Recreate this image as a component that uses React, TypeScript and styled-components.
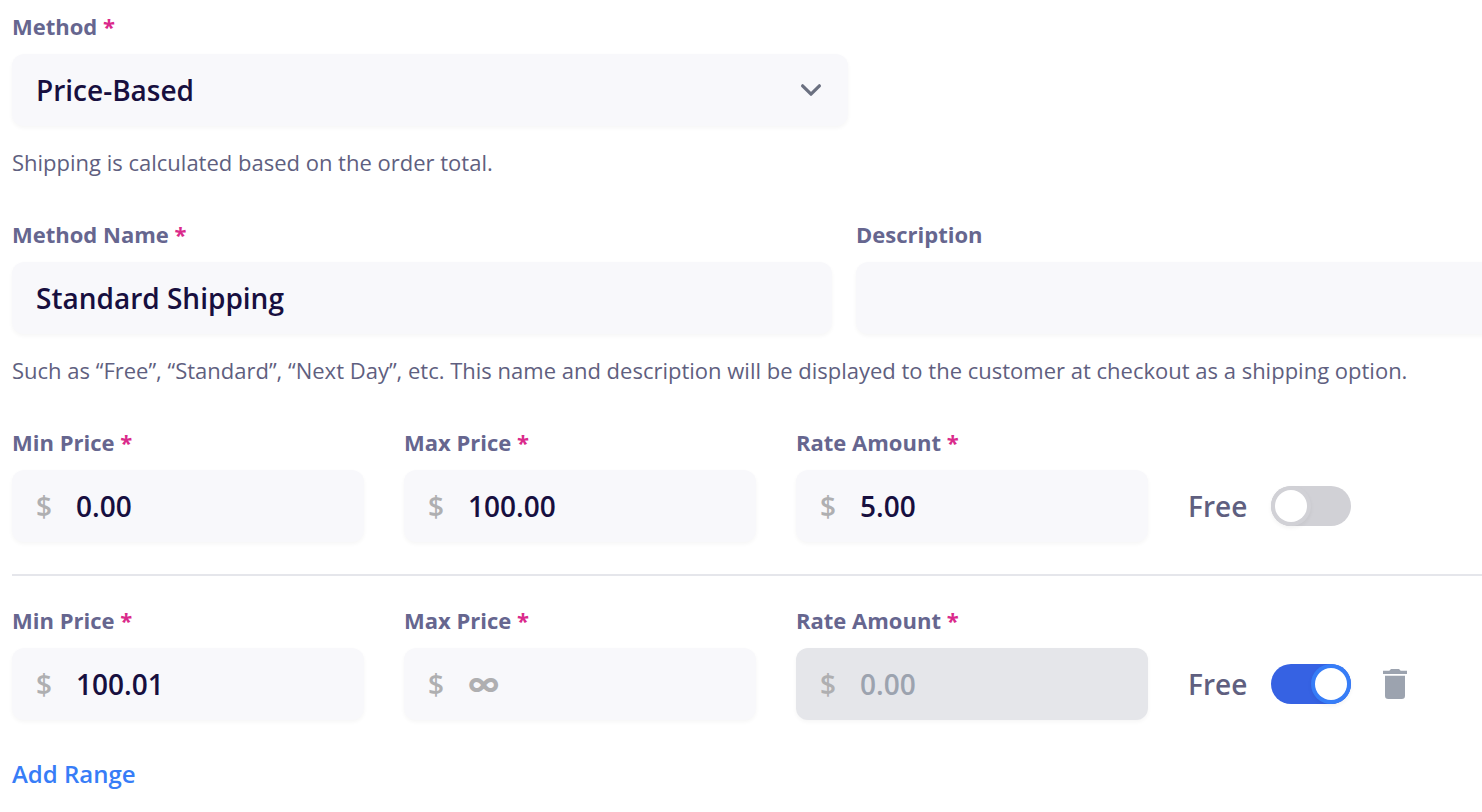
import React, { useState } from 'react';
import styled, { createGlobalStyle, css } from 'styled-components';

const GlobalStyle = createGlobalStyle`
  *, *::before, *::after { box-sizing: border-box; }
  body {
    margin: 0;
    background: #ffffff;
    color: #66668f;
    font-family: "Open Sans", "Noto Sans", sans-serif;
    overflow-x: hidden;
  }
`;

const Form = styled.form`
  padding: 12px 0 20px 12px;
`;

const Columns = styled.div`
  display: grid;
  grid-template-columns: 820px minmax(0, 1fr);
  column-gap: 24px;
  margin-right: -24px;
`;

const Field = styled.div<{ $width?: number }>`
  width: ${(p) => (p.$width ? `${p.$width}px` : 'auto')};
`;

const Label = styled.label`
  display: block;
  margin-bottom: 14px;
  font-size: 22px;
  font-weight: 700;
  line-height: 28px;
`;

const Star = styled.span`
  color: #da2a8b;
`;

const controlText = css`
  font-family: inherit;
  font-size: 28px;
  font-weight: 600;
  line-height: 40px;
  color: #170f3f;
`;

const surface = css`
  border: 0;
  border-radius: 12px;
  background: #f8f8fb;
  box-shadow: 0 2px 4px rgba(0, 0, 0, 0.04);
`;

const TextInput = styled.input`
  ${controlText}
  ${surface}
  display: block;
  width: 100%;
  height: 72px;
  padding: 0 24px;
  outline: none;
`;

const SelectBox = styled.div`
  ${surface}
  display: grid;
  align-items: center;
  height: 72px;
  > * { grid-area: 1 / 1; }
  > svg { justify-self: end; margin-right: 26px; pointer-events: none; }
`;

const Select = styled.select`
  ${controlText}
  appearance: none;
  width: 100%;
  height: 72px;
  padding: 0 64px 0 24px;
  border: 0;
  background: transparent;
  outline: none;
`;

const Hint = styled.p`
  margin: 20px 0 42px;
  font-size: 22px;
  line-height: 32px;
  color: #5f5f80;
`;

const RangeRow = styled.div`
  display: flex;
  align-items: flex-end;
  gap: 40px;
`;

const MoneyBox = styled.div<{ $disabled?: boolean }>`
  ${surface}
  display: flex;
  align-items: center;
  height: 72px;
  padding-left: 24px;
  ${(p) => p.$disabled && 'background: #e5e6ea;'}
`;

const Currency = styled.span`
  width: 40px;
  font-size: 28px;
  font-weight: 600;
  line-height: 40px;
  color: #afafb1;
`;

const MoneyInput = styled.input`
  ${controlText}
  flex: 1;
  min-width: 0;
  height: 72px;
  padding: 0;
  border: 0;
  background: transparent;
  outline: none;
  &::placeholder {
    font-family: Inter, sans-serif;
    font-size: 32px;
    font-weight: 700;
    color: #afafb1;
    opacity: 1;
  }
  &:disabled { color: #9ca3af; }
`;

const FreeToggle = styled.label`
  display: flex;
  align-items: center;
  gap: 24px;
  height: 72px;
  font-size: 28px;
  font-weight: 600;
  color: #5f5f80;
`;

const Switch = styled.input`
  appearance: none;
  display: flex;
  align-items: center;
  width: 80px;
  height: 40px;
  margin: 0;
  padding: 0 4px;
  border-radius: 20px;
  background: #d1d1d6;
  &::before {
    content: "";
    width: 32px;
    height: 32px;
    border-radius: 50%;
    background: #ffffff;
    box-shadow: 0 0 0 4px #d1d1d6, 0 2px 4px 4px rgba(0, 0, 0, 0.05);
  }
  &:checked {
    justify-content: flex-end;
    background: #3662e3;
  }
  &:checked::before { box-shadow: 0 0 0 4px #377df7, 0 2px 4px 4px rgba(0, 0, 0, 0.05); }
`;

const IconButton = styled.button`
  display: flex;
  align-items: center;
  height: 72px;
  margin-left: -8px;
  padding: 0;
  border: 0;
  background: transparent;
`;

const Divider = styled.hr`
  height: 2px;
  margin: 32px 0 30px;
  border: 0;
  background: #e5e6eb;
`;

const AddButton = styled.button`
  display: block;
  margin-top: 38px;
  padding: 0;
  border: 0;
  background: transparent;
  font-family: inherit;
  font-size: 24px;
  font-weight: 600;
  line-height: 32px;
  color: #377df7;
`;

const Chevron = () => (
  <svg width="22" height="14" viewBox="0 0 22 14" fill="none" aria-hidden="true">
    <path d="M2.6 2.800l8.400 8.400 8.400-8.400" stroke="#6b7080" strokeWidth="3.2" strokeLinecap="round" strokeLinejoin="round" />
  </svg>
);

const Trash = () => (
  <svg width="24" height="30" viewBox="0 0 24 30" fill="#9ca3af" aria-hidden="true">
    <path d="M0 1.7h6.3L8 0h8l1.7 1.7H24V5H0zM2 6.7h20v20a3.3 3.3 0 0 1-3.3 3.3H5.3A3.3 3.3 0 0 1 2 26.7z" />
  </svg>
);

interface FieldLabelProps { id: string; text: string; required?: boolean }

const FieldLabel = ({ id, text, required }: FieldLabelProps) => (
  <Label htmlFor={id}>
    {text}{required && <Star> *</Star>}
  </Label>
);

interface MoneyFieldProps { id: string; text: string; value: string; placeholder?: string; disabled?: boolean }

const MoneyField = ({ id, text, value, placeholder, disabled }: MoneyFieldProps) => (
  <Field $width={352}>
    <FieldLabel id={id} text={text} required />
    <MoneyBox $disabled={disabled}>
      <Currency>$</Currency>
      <MoneyInput id={id} defaultValue={value} placeholder={placeholder} disabled={disabled} />
    </MoneyBox>
  </Field>
);

interface RangeProps { id: string; min: string; max: string; rate: string; initialFree?: boolean; removable?: boolean }

const Range = ({ id, min, max, rate, initialFree = false, removable }: RangeProps) => {
  const [free, setFree] = useState(initialFree);
  return (
    <RangeRow>
      <MoneyField id={`${id}-min`} text="Min Price" value={min} />
      <MoneyField id={`${id}-max`} text="Max Price" value={max} placeholder="∞" />
      <MoneyField id={`${id}-rate`} text="Rate Amount" value={rate} disabled={free} />
      <FreeToggle>
        Free
        <Switch type="checkbox" role="switch" checked={free} onChange={(e) => setFree(e.target.checked)} />
      </FreeToggle>
      {removable && <IconButton type="button" aria-label="Remove range"><Trash /></IconButton>}
    </RangeRow>
  );
};

export default function App() {
  return (
    <>
      <GlobalStyle />
      <Form>
        <Field $width={836}>
          <FieldLabel id="method" text="Method" required />
          <SelectBox>
            <Select id="method" defaultValue="price">
              <option value="price">Price-Based</option>
            </Select>
            <Chevron />
          </SelectBox>
        </Field>
        <Hint>Shipping is calculated based on the order total.</Hint>
        <Columns>
          <Field>
            <FieldLabel id="name" text="Method Name" required />
            <TextInput id="name" defaultValue="Standard Shipping" />
          </Field>
          <Field>
            <FieldLabel id="description" text="Description" />
            <TextInput id="description" />
          </Field>
        </Columns>
        <Hint>
          Such as “Free”, “Standard”, “Next Day”, etc. This name and description will be displayed to the customer at checkout as a shipping option.
        </Hint>
        <Range id="first" min="0.00" max="100.00" rate="5.00" />
        <Divider />
        <Range id="second" min="100.01" max="" rate="0.00" initialFree removable />
        <AddButton type="button">Add Range</AddButton>
      </Form>
    </>
  );
}
